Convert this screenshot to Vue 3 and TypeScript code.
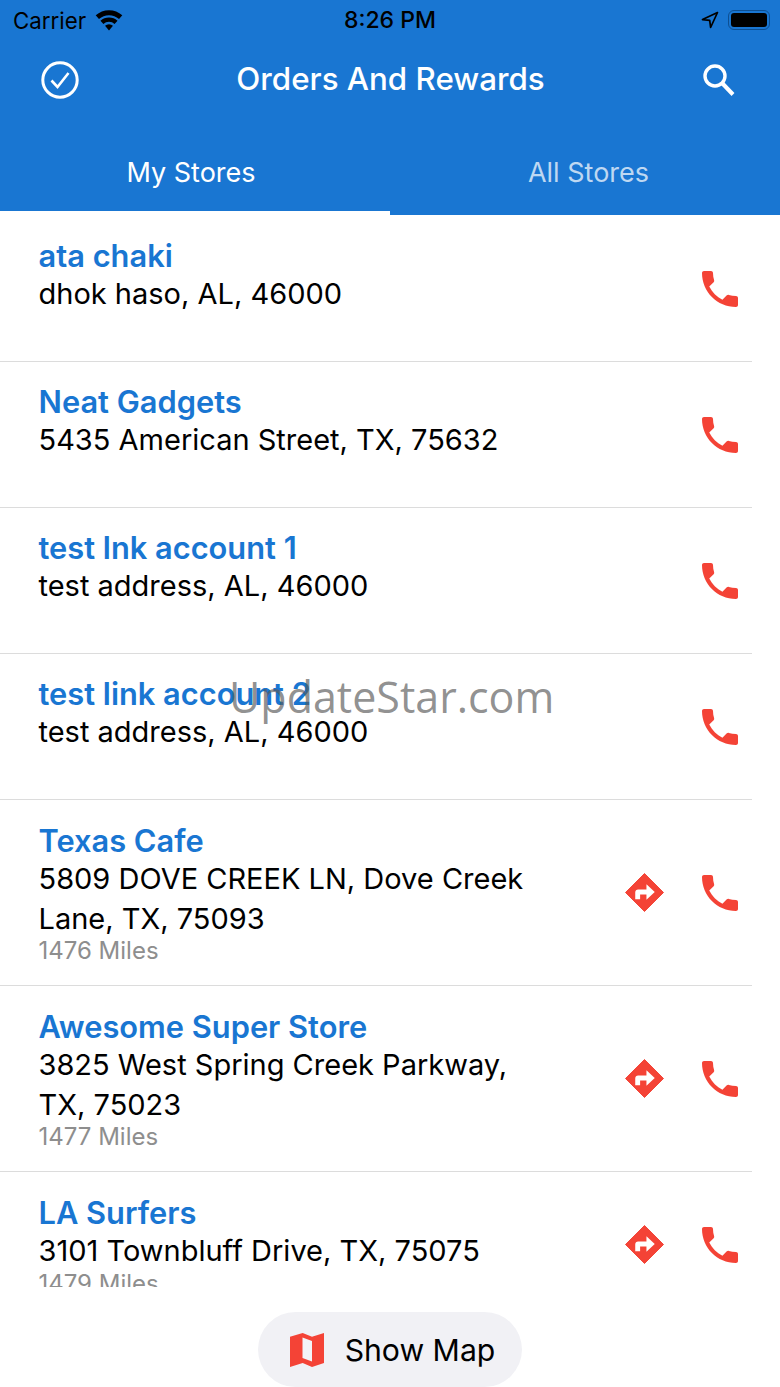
<script setup lang="ts">
interface Store {
  name: string
  address: string
  miles?: string
}

const stores: Store[] = [
  { name: 'ata chaki', address: 'dhok haso, AL, 46000' },
  { name: 'Neat Gadgets', address: '5435 American Street, TX, 75632' },
  { name: 'test lnk account 1', address: 'test address, AL, 46000' },
  { name: 'test link account 2', address: 'test address, AL, 46000' },
  { name: 'Texas Cafe', address: '5809 DOVE CREEK LN, Dove Creek Lane, TX, 75093', miles: '1476 Miles' },
  { name: 'Awesome Super Store', address: '3825 West Spring Creek Parkway, TX, 75023', miles: '1477 Miles' },
  { name: 'LA Surfers', address: '3101 Townbluff Drive, TX, 75075', miles: '1479 Miles' },
]

const phonePath =
  'M6.62 10.79c1.44 2.83 3.76 5.14 6.59 6.59l2.2-2.2c.27-.27.67-.36 1.02-.24 1.12.37 2.33.57 3.57.57.55 0 1 .45 1 1V20c0 .55-.45 1-1 1-9.39 0-17-7.61-17-17 0-.55.45-1 1-1h3.5c.55 0 1 .45 1 1 0 1.25.2 2.45.57 3.57.11.35.03.74-.25 1.02l-2.2 2.2z'
</script>

<template>
  <div class="screen">
    <header class="top">
      <div class="status">
        <div class="status-left">
          <span>Carrier</span>
          <svg class="wifi" viewBox="0 0 24 18">
            <path d="M12 17.500 8.600 13.600a5 5 0 0 1 6.800 0z" />
            <path d="M7.200 12 4.700 9.200a11 11 0 0 1 14.600 0L16.800 12a7.200 7.200 0 0 0-9.600 0z" />
            <path d="M3.400 7.700.6 4.600a17 17 0 0 1 22.800 0l-2.800 3.100a13 13 0 0 0-17.200 0z" />
          </svg>
        </div>
        <span class="time">8:26 PM</span>
        <div class="status-right">
          <svg class="arrow" viewBox="0 0 18 18">
            <path d="M16.500 1.500 1.500 8.600l7.200.7.9 7.200z" fill="none" stroke="#000" stroke-width="1.700" stroke-linejoin="round" />
          </svg>
          <div class="battery"><div class="battery-fill"></div></div>
        </div>
      </div>

      <div class="navbar">
        <svg class="nav-check" viewBox="0 0 38 38">
          <circle cx="19" cy="19" r="17.200" fill="none" stroke="#fff" stroke-width="3" />
          <path d="M10.500 19.500 16.500 26 27.500 12" fill="none" stroke="#fff" stroke-width="2.600" />
        </svg>
        <h1 class="title">Orders And Rewards</h1>
        <svg class="nav-search" viewBox="0 0 34 34">
          <circle cx="13" cy="13" r="10" fill="none" stroke="#fff" stroke-width="3.400" />
          <path d="M20.500 20.500 31 31.500" fill="none" stroke="#fff" stroke-width="4" />
        </svg>
      </div>

      <nav class="tabs">
        <div class="tab active">My Stores</div>
        <div class="tab other">All Stores</div>
      </nav>
    </header>

    <main class="list">
      <div v-for="store in stores" :key="store.name" class="row" :class="{ 'row-miles': store.miles }">
        <div class="info">
          <div class="name">{{ store.name }}</div>
          <div class="address">{{ store.address }}</div>
          <div v-if="store.miles" class="miles">{{ store.miles }}</div>
        </div>
        <div class="actions">
          <svg v-if="store.miles" class="direction" viewBox="0 0 40 40">
            <path d="M20 0.500 39.500 20 20 39.500 0.500 20z" fill="#f44336" stroke="#f44336" stroke-linejoin="round" />
            <path d="M10.500 27v-7c0-1.700 1.200-3 3-3H22v-5.500l8.500 8-8.500 8V22h-6.500v5z" fill="#fff" />
          </svg>
          <svg class="phone" viewBox="3 3 18 18">
            <path :d="phonePath" fill="#f44336" />
          </svg>
        </div>
      </div>
    </main>

    <footer class="bottom">
      <button class="map-btn">
        <svg class="map-icon" viewBox="0 0 34 34">
          <path d="M0 3.700 12.700 0 22 3.700 34 0v30l-12 4-9.300-4L0 34z" fill="#f44336" />
          <path d="M12.500 4.500 22 8v20.500l-9.500-3.500z" fill="#f3f3f7" />
        </svg>
        <span>Show Map</span>
      </button>
    </footer>

    <div class="watermark">UpdateStar.com</div>
  </div>
</template>

<style>
body {
  background: #fff;
}
</style>

<style scoped>
.screen {
  position: relative;
  width: 780px;
  height: 1387px;
  overflow: hidden;
  background: #fff;
  display: flex;
  flex-direction: column;
  font-family: Inter, "Liberation Sans", sans-serif;
}

.top {
  flex-shrink: 0;
  height: 215px;
  background: #1976d2;
  display: flex;
  flex-direction: column;
}

.status {
  height: 40px;
  padding: 0 10px 0 13px;
  display: flex;
  align-items: center;
  justify-content: space-between;
  color: #000;
  font-size: 22.300px;
}

.status-left {
  width: 200px;
  display: flex;
  align-items: center;
  gap: 9px;
}

.wifi {
  width: 28px;
  height: 21px;
  fill: #000;
}

.time {
  font-size: 23px;
  font-weight: 500;
}

.status-right {
  width: 203px;
  display: flex;
  align-items: center;
  justify-content: flex-end;
  gap: 9px;
}

.arrow {
  width: 18px;
  height: 18px;
}

.battery {
  width: 42px;
  height: 20px;
  padding: 2px;
  box-sizing: border-box;
  border: 1.500px solid #0d4f92;
  border-radius: 6px;
}

.battery-fill {
  height: 100%;
  background: #000;
  border-radius: 3px;
}

.navbar {
  height: 80px;
  padding: 0 44px 0 41px;
  display: flex;
  align-items: center;
  justify-content: space-between;
}

.nav-check {
  width: 38px;
  height: 38px;
}

.nav-search {
  width: 34px;
  height: 34px;
}

.title {
  margin: 0 0 2px;
  color: #fff;
  font-size: 31.300px;
  font-weight: 500;
}

.tabs {
  flex: 1;
  display: flex;
}

.tab {
  width: 390px;
  padding: 20px 0 11px;
  box-sizing: border-box;
  display: flex;
  align-items: center;
  justify-content: center;
  color: rgba(255, 255, 255, 0.72);
  font-size: 27px;
}

.tab.active {
  color: #fff;
  padding: 24px 8px 11px 0;
  border-bottom: 4px solid #fff;
}

.tab.other {
  padding-left: 7px;
}

.list {
  height: 1072px;
  flex-shrink: 0;
  overflow: hidden;
  padding-top: 1px;
  box-sizing: border-box;
}

.row {
  min-height: 146px;
  box-sizing: border-box;
  padding: 22px 0 21px 38.500px;
  border-bottom: 1px solid #dcdcdc;
  margin-right: 28px;
  display: flex;
  position: relative;
}

.row-miles {
  padding-top: 23px;
}

.info {
  width: 500px;
}

.name {
  color: #1976d2;
  font-size: 30.800px;
  font-weight: 600;
  line-height: 36px;
}

.address {
  color: #000;
  font-size: 29px;
  line-height: 39.500px;
}

.miles {
  color: #8e8e8e;
  font-size: 24px;
  line-height: 26px;
}

.actions {
  position: absolute;
  top: 0;
  bottom: 0;
  right: 14px;
  display: flex;
  align-items: center;
  gap: 38px;
}

.direction {
  width: 39px;
  height: 39px;
}

.phone {
  width: 36px;
  height: 36px;
}

.bottom {
  flex: 1;
  display: flex;
  justify-content: center;
  align-items: flex-end;
}

.map-btn {
  width: 264px;
  height: 75px;
  padding: 0 0 0 5px;
  border: none;
  border-radius: 38px;
  background: #f1f1f5;
  display: flex;
  align-items: center;
  justify-content: center;
  gap: 21px;
  color: #000;
  font-size: 30.200px;
  font-family: Inter, sans-serif;
}

.map-icon {
  width: 34px;
  height: 34px;
}

.watermark {
  position: absolute;
  left: 229px;
  top: 669px;
  color: rgba(90, 90, 90, 0.68);
  font-size: 43px;
  font-family: "Open Sans", sans-serif;
  line-height: 56px;
  pointer-events: none;
}
</style>
